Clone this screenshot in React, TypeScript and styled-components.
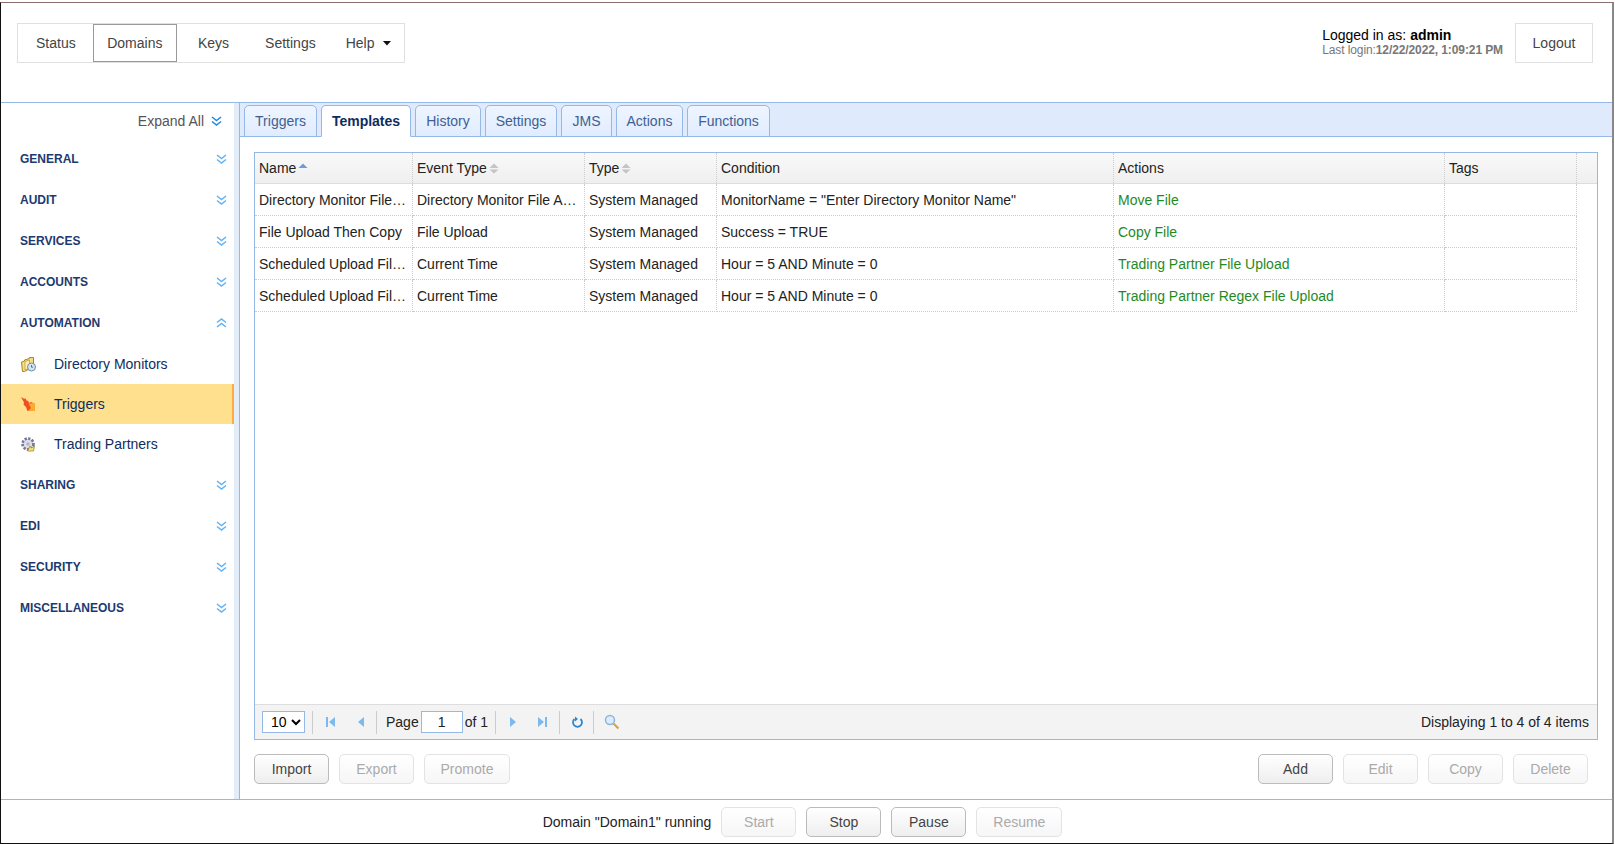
import React from "react";
import styled, { createGlobalStyle } from "styled-components";

const Global = createGlobalStyle`
  html, body { margin: 0; padding: 0; background: #fff; }
  body { font-family: "Liberation Sans", Arial, sans-serif; font-size: 14px; color: #000; overflow: hidden; }
  * { box-sizing: border-box; }
`;

const Frame = styled.div`
  width: 1614px; height: 842px; margin-top: 2px;
  border-top: 1px solid #8c6f73; border-left: 1px solid #111; border-right: 2px solid #888; border-bottom: 1px solid #111;
  display: flex; flex-direction: column; background: #fff;
`;
const Header = styled.header`
  height: 100px; flex: none; display: flex; align-items: flex-start; justify-content: space-between;
  padding: 20px 19px 0 16px; border-bottom: 1px solid #95b8e7;
`;
const Nav = styled.nav`
  display: flex; align-items: stretch; height: 40px; width: 388px; padding-left: 3px;
  border: 1px solid #e0e0e0;
`;
const NavItem = styled.div<{ $gap?: number; $active?: boolean }>`
  display: flex; align-items: center; gap: 4px; padding: 0 ${p => (p.$active ? 13.5 : 14)}px; margin-left: ${p => p.$gap ?? 0}px;
  color: #444; border: 1px solid ${p => (p.$active ? "#999" : "transparent")};
`;
const Caret = styled.span`
  width: 9px; height: 5px; flex: none; margin-left: 4px; background: #111; clip-path: polygon(0 0, 100% 0, 50% 100%);
`;
const UserArea = styled.div`display: flex; align-items: flex-start; gap: 12px;`;
const UserText = styled.div`padding-top: 5px; line-height: 14px;`;
const LastLogin = styled.div`font-size: 12px; color: #777; line-height: 16px; letter-spacing: -0.1px;`;
const Logout = styled.div`
  width: 78px; height: 40px; display: flex; align-items: center; justify-content: center;
  border: 1px solid #e0e0e0; color: #444;
`;
const Body = styled.div`flex: 1; display: flex; min-height: 0;`;
const Sidebar = styled.aside`
  width: 239px; flex: none; border-right: 1px solid #95b8e7; background: #fff; position: relative; display: flex;
`;
const SideInner = styled.div`width: 233px; flex: none; display: flex; flex-direction: column;`;
const Strip = styled.div`flex: 1; background: #e3ecf9;`;
const ExpandAll = styled.div`
  height: 35px; flex: none; display: flex; align-items: center; justify-content: flex-end; gap: 7px; padding-right: 12px; color: #555;
`;
const Group = styled.div`
  height: 41px; flex: none; display: flex; align-items: center; justify-content: space-between;
  padding: 0 7px 0 19px; font-size: 12px; font-weight: bold; color: #1d3a70;
`;
const SubItem = styled.div<{ $active?: boolean; $first?: boolean }>`
  height: 40px; flex: none; display: flex; align-items: center; gap: 18px; padding-left: 20px; color: #0e2d5f;
  margin-top: ${p => (p.$first ? 1 : 0)}px;
  background: ${p => (p.$active ? "#ffe08f" : "transparent")};
  border-right: 2px solid ${p => (p.$active ? "#ffab3f" : "transparent")};
`;
const Main = styled.main`flex: 1; min-width: 0; display: flex; flex-direction: column;`;
const TabBar = styled.div`
  height: 34px; flex: none; display: flex; align-items: flex-end; gap: 4px; padding-left: 4px;
  background: #dfeafc; border-bottom: 1px solid #95b8e7;
`;
const Tab = styled.div<{ $active?: boolean; $w: number }>`
  width: ${p => p.$w}px; height: 32px; margin-bottom: -1px; display: flex; align-items: center; justify-content: center;
  border: 1px solid #95b8e7; border-radius: 5px 5px 0 0;
  color: ${p => (p.$active ? "#0e2d5f" : "#416090")}; font-weight: ${p => (p.$active ? "bold" : "normal")};
  background: ${p => (p.$active ? "#fff" : "linear-gradient(#eff5ff, #e0ecff)")};
  border-bottom-color: ${p => (p.$active ? "#fff" : "#95b8e7")};
`;
const Content = styled.div`flex: 1; display: flex; flex-direction: column; padding: 15px 14px 0 14px; min-height: 0;`;
const Panel = styled.div`
  height: 588px; flex: none; border: 1px solid #95b8e7; display: flex; flex-direction: column;
`;
const HeadRow = styled.div`
  height: 31px; flex: none; display: flex; background: linear-gradient(#f9f9f9, #efefef); border-bottom: 1px solid #ddd;
`;
const Row = styled.div`height: 32px; flex: none; display: flex;`;
const HeadCell = styled.div<{ $w: number }>`
  width: ${p => p.$w}px; flex: none; display: flex; align-items: center; gap: 2px; padding: 0 4px; color: #222;
  border-right: 1px dotted #ccc;
`;
const Cell = styled.div<{ $w: number; $link?: boolean }>`
  width: ${p => p.$w}px; flex: none; padding: 1px 4px 0; line-height: 31px; white-space: nowrap; overflow: hidden; text-overflow: ellipsis;
  color: ${p => (p.$link ? "#1f8a1f" : "#222")};
  border-right: 1px dotted #ccc; border-bottom: 1px dotted #ccc;
`;
const Spacer = styled.div`flex: 1;`;
const Pager = styled.div`
  height: 35px; flex: none; display: flex; align-items: center; padding: 0 8px 0 7px;
  background: #f3f3f3; border-top: 1px solid #ddd; color: #222;
`;
const PageSelect = styled.select`
  width: 43px; height: 22px; padding: 0 0 0 4px; font: 14px "Liberation Sans", Arial, sans-serif; background: #fff; color: #000;
  border: 1px solid #95b8e7; border-radius: 0; margin-right: 7px;
`;
const Sep = styled.div<{ $l?: number }>`
  width: 1px; height: 23px; background: #ccc; flex: none; margin-left: ${p => p.$l ?? 0}px;
`;
const PagerIcon = styled.svg<{ $l: number }>`flex: none; margin-left: ${p => p.$l}px; display: block;`;
const PageInput = styled.input`
  width: 42px; height: 22px; margin: 0 2px; padding: 0; border: 1px solid #95b8e7; text-align: center;
  font: 14px "Liberation Sans", Arial, sans-serif; color: #222; background: #fff;
`;
const Display = styled.div`margin-left: auto;`;
const Label = styled.span`margin-left: 9px;`;
const ActionBar = styled.div`display: flex; justify-content: space-between; margin-top: 14px; padding-right: 10px;`;
const BtnGroup = styled.div`display: flex; gap: 10px;`;
const Button = styled.div<{ $w?: number; $off?: boolean }>`
  width: ${p => p.$w ?? 75}px; height: 30px; display: flex; align-items: center; justify-content: center;
  border-radius: 5px; border: 1px solid ${p => (p.$off ? "#e3e3e3" : "#bbb")};
  color: ${p => (p.$off ? "#aaa" : "#444")};
  background: ${p => (p.$off ? "linear-gradient(#fff, #f6f6f6)" : "linear-gradient(#fff, #eee)")};
`;
const Footer = styled.footer`
  height: 44px; flex: none; display: flex; align-items: center; justify-content: center; gap: 10px;
  border-top: 1px solid #95b8e7; padding-right: 8px;
`;
const FooterText = styled.span`color: #222;`;

const Chevrons = ({ up, dark }: { up?: boolean; dark?: boolean }) => (
  <svg width="11" height="10" viewBox="0 0 11 10" style={{ transform: up ? "scaleY(-1)" : undefined }}>
    <path d="M1 1l4.500 3.500L10 1M1 5.500L5.500 9 10 5.500" fill="none" stroke={dark ? "#1e88e5" : "#62b2f3"} strokeWidth="1.5" />
  </svg>
);
const FolderIcon = () => (
  <svg width="15" height="15" viewBox="0 0 15 15">
    <path d="M.5 5l3-1V3l5-1.500V.5h4v9l-9 5h-2z" fill="#f6dc8c" stroke="#a88418" strokeWidth="1" />
    <path d="M4 4.500l4.500-1.500v8L4 13z" fill="#fdf0b8" stroke="#b8951f" strokeWidth="0.7" />
    <circle cx="10.500" cy="10" r="4" fill="#d5e4ee" stroke="#6e8ea6" />
    <path d="M10.500 8v2.200h1.600" fill="none" stroke="#456" strokeWidth="0.8" />
  </svg>
);
const FlameIcon = () => (
  <svg width="15" height="15" viewBox="0 0 15 15">
    <path d="M0 0l3.500 2 .5-1 2 3 1-.5L8 6l2-1 4 2v7H6.500L5 10 2.500 7.500 3 5.500z" fill="#ee4f1e" />
    <path d="M7.500 6.500L14 6v8H7l3-3z" fill="#ffa92e" />
  </svg>
);
const GearIcon = () => (
  <svg width="15" height="15" viewBox="0 0 15 15">
    <circle cx="7" cy="7" r="5.300" fill="#d6d6e6" stroke="#77779a" strokeWidth="3" strokeDasharray="2.200 1.300" />
    <circle cx="7" cy="7" r="4" fill="#dedeea" />
    <circle cx="7" cy="7" r="1.800" fill="#b4b4cc" />
    <path d="M6.500 14l2.500-5 1.500 2 3-2-1 5z" fill="#f5e07a" stroke="#8f7c1c" strokeWidth="0.7" />
  </svg>
);
const SortArrows = ({ asc }: { asc?: boolean }) => (
  <svg width="10" height="11" viewBox="0 0 10 11">
    <path d="M5 .5L9.500 5H.5z" fill={asc ? "#6f9bd8" : "#c4c4c4"} />
    {!asc && <path d="M5 10.500L.5 6.500h9z" fill="#c4c4c4" />}
  </svg>
);

const W = [158, 172, 132, 397, 331, 132];
const rows = [
  ["Directory Monitor File Actions", "Directory Monitor File Added", "System Managed", 'MonitorName = "Enter Directory Monitor Name"', "Move File"],
  ["File Upload Then Copy", "File Upload", "System Managed", "Success = TRUE", "Copy File"],
  ["Scheduled Upload File To", "Current Time", "System Managed", "Hour = 5 AND Minute = 0", "Trading Partner File Upload"],
  ["Scheduled Upload File Regex", "Current Time", "System Managed", "Hour = 5 AND Minute = 0", "Trading Partner Regex File Upload"],
];
const tabs: [string, number][] = [["Triggers", 73], ["Templates", 90], ["History", 66], ["Settings", 72], ["JMS", 51], ["Actions", 67], ["Functions", 83]];

export default function App() {
  return (
    <Frame>
      <Global />
      <Header>
        <Nav>
          <NavItem>Status</NavItem>
          <NavItem $gap={2} $active>Domains</NavItem>
          <NavItem $gap={6}>Keys</NavItem>
          <NavItem $gap={6}>Settings</NavItem>
          <NavItem>Help<Caret /></NavItem>
        </Nav>
        <UserArea>
          <UserText>
            Logged in as: <b>admin</b>
            <LastLogin>Last login:<b>12/22/2022, 1:09:21 PM</b></LastLogin>
          </UserText>
          <Logout>Logout</Logout>
        </UserArea>
      </Header>
      <Body>
        <Sidebar>
          <SideInner>
            <ExpandAll>Expand All <Chevrons dark /></ExpandAll>
            <Group>GENERAL<Chevrons /></Group>
            <Group>AUDIT<Chevrons /></Group>
            <Group>SERVICES<Chevrons /></Group>
            <Group>ACCOUNTS<Chevrons /></Group>
            <Group>AUTOMATION<Chevrons up /></Group>
            <SubItem $first><FolderIcon />Directory Monitors</SubItem>
            <SubItem $active><FlameIcon />Triggers</SubItem>
            <SubItem><GearIcon />Trading Partners</SubItem>
            <Group>SHARING<Chevrons /></Group>
            <Group>EDI<Chevrons /></Group>
            <Group>SECURITY<Chevrons /></Group>
            <Group>MISCELLANEOUS<Chevrons /></Group>
          </SideInner>
          <Strip />
        </Sidebar>
        <Main>
          <TabBar>
            {tabs.map(([t, w]) => <Tab key={t} $w={w} $active={t === "Templates"}>{t}</Tab>)}
          </TabBar>
          <Content>
            <Panel>
              <HeadRow>
                <HeadCell $w={W[0]}>Name <SortArrows asc /></HeadCell>
                <HeadCell $w={W[1]}>Event Type <SortArrows /></HeadCell>
                <HeadCell $w={W[2]}>Type <SortArrows /></HeadCell>
                <HeadCell $w={W[3]}>Condition</HeadCell>
                <HeadCell $w={W[4]}>Actions</HeadCell>
                <HeadCell $w={W[5]}>Tags</HeadCell>
              </HeadRow>
              {rows.map((r, i) => (
                <Row key={i}>
                  {r.map((c, j) => <Cell key={j} $w={W[j]} $link={j === 4}>{c}</Cell>)}
                  <Cell $w={W[5]} />
                </Row>
              ))}
              <Spacer />
              <Pager>
                <PageSelect defaultValue="10"><option>10</option><option>20</option></PageSelect>
                <Sep />
                <PagerIcon $l={13} width="10" height="12" viewBox="0 0 10 12"><path d="M0 1h2v10H0zM9 1v10L3 6z" fill="#7cb9ef" /></PagerIcon>
                <PagerIcon $l={21} width="8" height="12" viewBox="0 0 8 12"><path d="M7 1v10L1 6z" fill="#7cb9ef" /></PagerIcon>
                <Sep $l={11} />
                <Label>Page</Label>
                <PageInput defaultValue="1" />
                of 1
                <Sep $l={7} />
                <PagerIcon $l={13} width="8" height="12" viewBox="0 0 8 12"><path d="M1 1v10l6-5z" fill="#7cb9ef" /></PagerIcon>
                <PagerIcon $l={20} width="10" height="12" viewBox="0 0 10 12"><path d="M1 1v10l6-5zM8 1h2v10H8z" fill="#7cb9ef" /></PagerIcon>
                <Sep $l={12} />
                <PagerIcon $l={11} width="13" height="13" viewBox="0 0 13 13"><path d="M3.500 3A4.500 4.500 0 1 0 9.500 3" fill="none" stroke="#2f86d0" strokeWidth="1.8" /><path d="M4 0.500v5l3-2.500z" fill="#2f86d0" /></PagerIcon>
                <Sep $l={9} />
                <PagerIcon $l={10} width="16" height="16" viewBox="0 0 16 16"><circle cx="6" cy="6" r="4.500" fill="#dcecff" stroke="#8fb4dc" strokeWidth="1.500" /><path d="M9.500 9.500L14.500 14.500" stroke="#d9a441" strokeWidth="2.200" /></PagerIcon>
                <Display>Displaying 1 to 4 of 4 items</Display>
              </Pager>
            </Panel>
            <ActionBar>
              <BtnGroup>
                <Button>Import</Button>
                <Button $off>Export</Button>
                <Button $off $w={86}>Promote</Button>
              </BtnGroup>
              <BtnGroup>
                <Button>Add</Button>
                <Button $off>Edit</Button>
                <Button $off>Copy</Button>
                <Button $off>Delete</Button>
              </BtnGroup>
            </ActionBar>
          </Content>
        </Main>
      </Body>
      <Footer>
        <FooterText>Domain "Domain1" running</FooterText>
        <Button $off>Start</Button>
        <Button>Stop</Button>
        <Button>Pause</Button>
        <Button $off $w={86}>Resume</Button>
      </Footer>
    </Frame>
  );
}
